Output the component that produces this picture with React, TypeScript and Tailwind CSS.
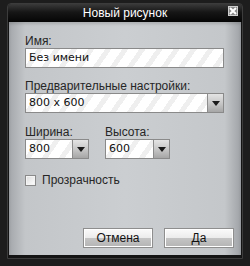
import type { ReactNode } from 'react';

const stripeInput =
  'bg-[repeating-linear-gradient(125deg,#ffffff_0px,#ffffff_9px,#efefef_9px,#efefef_14px)]';

const uiFont = { fontFamily: '"Liberation Sans", Arial, sans-serif' };
const valueFont = { fontFamily: '"DejaVu Sans", Verdana, sans-serif' };

const ArrowButton = () => (
  <div className="flex h-full w-[16px] items-center justify-center border-l border-[#8c8c8c] bg-[linear-gradient(180deg,#e4e4e4_0%,#c8c8c8_50%,#a6a6a6_100%)]">
    <svg width="8" height="5" viewBox="0 0 8 5">
      <path d="M0 0 H8 L4 5 Z" fill="#1a1a1a" />
    </svg>
  </div>
);

const Field = ({ value, width, arrow }: { value: string; width: string; arrow?: boolean }) => (
  <div className={`flex h-[20px] ${width} border border-[#8a8a8a] bg-white`}>
    <div className={`flex flex-1 items-center pl-[3px] text-[11px] text-[#111] ${stripeInput}`} style={valueFont}>
      {value}
    </div>
    {arrow ? <ArrowButton /> : null}
  </div>
);

const Label = ({ children }: { children: ReactNode }) => (
  <div className="h-[13px] text-[12px] leading-[13px] text-[#262626]" style={uiFont}>
    {children}
  </div>
);

const DialogButton = ({ children }: { children: ReactNode }) => (
  <button
    type="button"
    className="h-[20px] w-[70px] border border-[#8e8e8e] bg-[linear-gradient(180deg,#fafafa_0%,#ececec_48%,#c4c4c4_52%,#b4b4b4_100%)] p-0 text-[12px] leading-[17px] text-[#111] shadow-[inset_0_0_0_1px_#ffffff]"
    style={uiFont}
  >
    {children}
  </button>
);

export default function App() {
  return (
    <div className="h-[266px] w-[250px] overflow-hidden bg-[#1d1d1d] pl-[7px] pt-[3px]">
      <div className="flex h-[256px] w-[236px] flex-col rounded-t-[4px] border border-[#3c3c3c] bg-[#141414]">
        <div className="relative flex h-[18px] items-center justify-center rounded-t-[3px] bg-[linear-gradient(180deg,#3a3a3a_0%,#161616_45%,#050505_100%)]">
          <span className="text-[12px] text-white" style={uiFont}>
            Новый рисунок
          </span>
          <div className="absolute right-[4px] top-[2px] flex h-[10px] w-[10px] items-center justify-center border border-[#cfcfcf] bg-[#8a8a8a]">
            <svg width="8" height="8" viewBox="0 0 8 8">
              <path d="M1 1 L7 7 M7 1 L1 7" stroke="#ffffff" strokeWidth="2" />
            </svg>
          </div>
        </div>

        <div className="mx-[1px] flex flex-1 flex-col bg-[linear-gradient(90deg,#a4a7ab_0%,#c3c6c9_7%,#cbced1_50%,#c4c7ca_93%,#9fa2a6_100%)] pl-[16px] pt-[13px] shadow-[inset_0_2px_3px_rgba(0,0,0,0.15)]">
          <Label>Имя:</Label>
          <Field value="Без имени" width="w-[199px]" />

          <div className="mt-[12px]">
            <Label>Предварительные настройки:</Label>
          </div>
          <Field value="800 x 600" width="w-[199px]" arrow />

          <div className="mt-[13px] flex gap-[16px]">
            <div>
              <Label>Ширина:</Label>
              <Field value="800" width="w-[64px]" arrow />
            </div>
            <div>
              <Label>Высота:</Label>
              <Field value="600" width="w-[65px]" arrow />
            </div>
          </div>

          <div className="mt-[15px] flex items-center gap-[6px]">
            <div className="h-[11px] w-[11px] border border-[#8a8a8a] bg-[linear-gradient(135deg,#dcdcdc_0%,#ffffff_100%)] shadow-[inset_0_0_0_1px_#f4f4f4]" />
            <span className="text-[12px] leading-[13px] text-[#262626]" style={uiFont}>
              Прозрачность
            </span>
          </div>

          <div className="mt-[41px] flex gap-[11px] pl-[58px]">
            <DialogButton>Отмена</DialogButton>
            <DialogButton>Да</DialogButton>
          </div>
        </div>
        <div className="h-[3px]" />
      </div>
    </div>
  );
}
